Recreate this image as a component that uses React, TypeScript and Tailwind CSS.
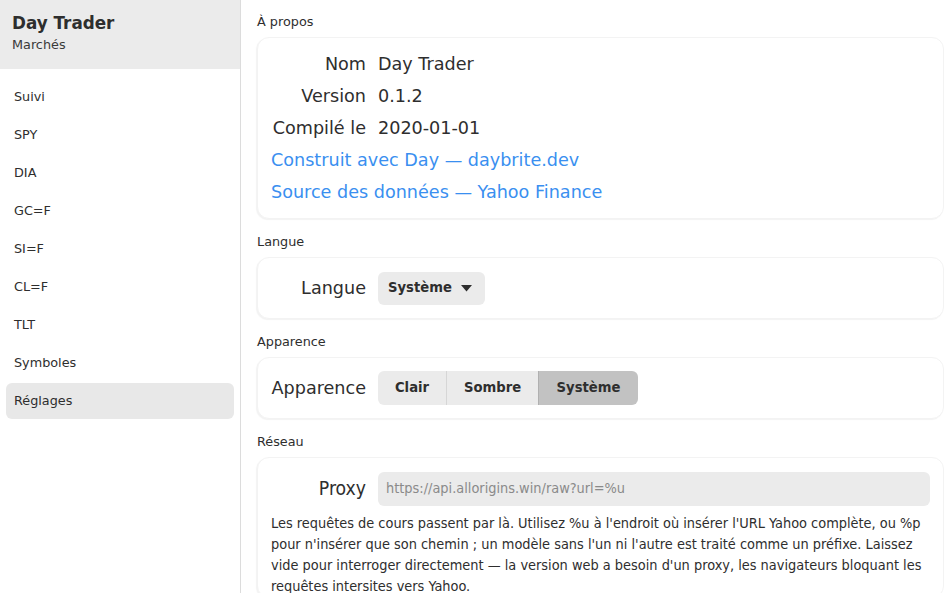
const NAV = ["Suivi", "SPY", "DIA", "GC=F", "SI=F", "CL=F", "TLT", "Symboles", "Réglages"];

function Section({ title, children }: { title: string; children: React.ReactNode }) {
  return (
    <section className="flex flex-col">
      <h3 className="text-[12.8px] leading-[18px] text-[#2e2e2e] mb-[6px]">{title}</h3>
      <div className="rounded-[12px] border border-[#f3f3f3] bg-white shadow-[-1px_1px_1px_rgba(0,0,0,0.05)] px-[13px]">
        {children}
      </div>
    </section>
  );
}

function Row({ label, children }: { label: string; children: React.ReactNode }) {
  return (
    <div className="flex items-center gap-3 h-8">
      <span className="w-[95px] shrink-0 text-right">{label}</span>
      {children}
    </div>
  );
}

export default function App() {
  return (
    <div
      className="flex h-[593px] w-[944px] overflow-hidden bg-white text-[#2e2e2e]"
      style={{ fontFamily: "'DejaVu Sans', sans-serif" }}
    >
      {/* Sidebar */}
      <aside className="w-[241px] shrink-0 border-r border-[#dcdcdc] flex flex-col">
        <div className="h-[69px] bg-[#ebebeb] px-3 pt-[11px]">
          <div className="text-[16.8px] font-bold leading-[24px] text-[#2e2e2e]">Day Trader</div>
          <div className="text-[12.8px] leading-[19px] text-[#3a3a3a]">Marchés</div>
        </div>
        <nav className="flex flex-col gap-[2px] px-[6px] pt-[10px]">
          {NAV.map((n) => (
            <div
              key={n}
              className={`h-9 flex items-center px-2 rounded-[6px] text-[12.8px] ${
                n === "Réglages" ? "bg-[#e8e8e8]" : ""
              }`}
            >
              {n}
            </div>
          ))}
        </nav>
      </aside>

      {/* Main */}
      <main className="flex-1 pl-4 pr-0 pt-[13px] flex flex-col gap-[14px] text-[17.6px]">
        <Section title="À propos">
          <div className="py-[10px] flex flex-col">
            <Row label="Nom">
              <span>Day Trader</span>
            </Row>
            <Row label="Version">
              <span>0.1.2</span>
            </Row>
            <Row label="Compilé le">
              <span>2020-01-01</span>
            </Row>
            <div className="h-8 flex items-center text-[#3a8ff0]">Construit avec Day — daybrite.dev</div>
            <div className="h-8 flex items-center text-[#3a8ff0]">Source des données — Yahoo Finance</div>
          </div>
        </Section>

        <Section title="Langue">
          <div className="py-[14px]">
            <Row label="Langue">
              <button className="h-[33px] w-[107px] rounded-[6px] bg-[#ebebeb] flex items-center gap-[9px] pl-[10px] text-[13.2px] font-bold text-[#2e2e2e]">
                Système
                <svg width="11" height="7" viewBox="0 0 11 7">
                  <path d="M0 0 L11 0 L5.5 6.5 Z" fill="#2e2e2e" />
                </svg>
              </button>
            </Row>
          </div>
        </Section>

        <Section title="Apparence">
          <div className="py-[14px]">
            <Row label="Apparence">
              <div className="flex h-[34px] rounded-[6px] overflow-hidden text-[13.2px] font-bold text-[#2e2e2e]">
                <div className="w-[69px] flex items-center justify-center bg-[#ebebeb] border-r border-[#d6d6d6]">Clair</div>
                <div className="w-[92px] flex items-center justify-center bg-[#ebebeb] border-r border-[#b0b0b0]">Sombre</div>
                <div className="w-[99px] flex items-center justify-center bg-[#c2c2c2]">Système</div>
              </div>
            </Row>
          </div>
        </Section>

        <Section title="Réseau">
          <div className="pt-[14px]">
            <div className="flex items-center gap-3 h-[34px]">
              <span className="w-[95px] shrink-0 text-right text-[19.2px]" style={{ fontStretch: "condensed" }}>
                Proxy
              </span>
              <div
                className="flex-1 h-[34px] rounded-[6px] bg-[#ebebeb] flex items-center px-2 text-[14.4px] text-[#8a8a8a]"
                style={{ fontStretch: "condensed" }}
              >
                https://api.allorigins.win/raw?url=%u
              </div>
            </div>
            <p
              className="mt-[7px] text-[14.4px] leading-[21px] text-[#2e2e2e] pr-[6px]"
              style={{ fontStretch: "condensed" }}
            >
              Les requêtes de cours passent par là. Utilisez %u à l'endroit où insérer l'URL Yahoo complète, ou %p pour
              n'insérer que son chemin ; un modèle sans l'un ni l'autre est traité comme un préfixe. Laissez vide pour
              interroger directement — la version web a besoin d'un proxy, les navigateurs bloquant les requêtes
              intersites vers Yahoo.
            </p>
          </div>
        </Section>
      </main>
    </div>
  );
}
